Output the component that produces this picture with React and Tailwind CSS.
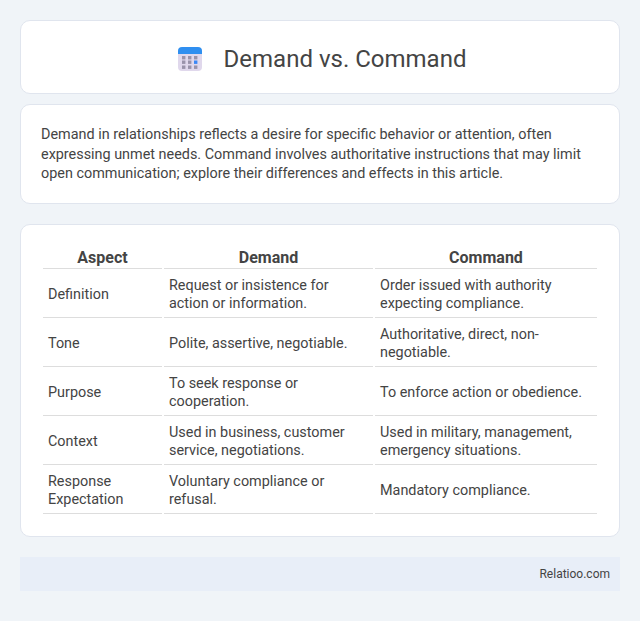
import React from 'react';

const rows = [
  ['Definition', 'Request or insistence for action or information.', 'Order issued with authority expecting compliance.'],
  ['Tone', 'Polite, assertive, negotiable.', 'Authoritative, direct, non-negotiable.'],
  ['Purpose', 'To seek response or cooperation.', 'To enforce action or obedience.'],
  ['Context', 'Used in business, customer service, negotiations.', 'Used in military, management, emergency situations.'],
  ['Response Expectation', 'Voluntary compliance or refusal.', 'Mandatory compliance.'],
];

const CalendarIcon = () => (
  <svg width="24" height="24" viewBox="0 0 24 24" className="shrink-0">
    <rect x="0" y="1" width="24" height="23" rx="4" fill="#e0d8ec" />
    <path d="M0 7V4a4 4 0 0 1 4-4h16a4 4 0 0 1 4 4v3z" fill="#2f8ff0" />
    {[4, 10, 16].map((x) =>
      [9, 13.5, 18.5].map((y) => (
        <rect key={`${x}-${y}`} x={x} y={y} width="3.4" height="3.4" fill={x === 16 && y === 13.5 ? '#3b88f5' : '#9a93aa'} />
      ))
    )}
  </svg>
);

export default function App() {
  return (
    <div className="min-h-[621px] bg-[#f0f4f8] px-5 pt-5 pb-[30px] text-[#444] font-['Roboto',sans-serif]">
      <div className="flex h-[74px] items-center justify-center gap-[22px] rounded-[10px] border border-[#e0e5ee] bg-white pt-[4px] pl-[4px]">
        <CalendarIcon />
        <h1 className="text-[24px] font-normal text-[#444]">Demand vs. Command</h1>
      </div>

      <div className="mt-[10px] h-[100px] rounded-[10px] border border-[#e0e5ee] bg-white px-5 pt-5 text-[14.4px] leading-[19.5px]">
        Demand in relationships reflects a desire for specific behavior or attention, often expressing unmet needs. Command involves authoritative instructions that may limit open communication; explore their differences and effects in this article.
      </div>

      <div className="mt-5 h-[313px] rounded-[10px] border border-[#e0e5ee] bg-white px-5 pt-5">
        <table className="w-full table-fixed border-separate border-spacing-[2px] text-[14.4px] leading-[18px]">
          <colgroup>
            <col className="w-[119px]" />
            <col className="w-[209px]" />
            <col />
          </colgroup>
          <thead>
            <tr>
              {['Aspect', 'Demand', 'Command'].map((h) => (
                <th key={h} className="border-b border-[#ddd] pt-px text-center text-[16px] font-bold leading-[20px]">{h}</th>
              ))}
            </tr>
          </thead>
          <tbody>
            {rows.map((r) => (
              <tr key={r[0]}>
                {r.map((c) => (
                  <td key={c} className="border-b border-[#ddd] px-[5px] pt-[6px] pb-[4px] align-middle">{c}</td>
                ))}
              </tr>
            ))}
          </tbody>
        </table>
      </div>

      <div className="mt-5 flex h-[34px] items-center justify-end bg-[#e8eef8] px-[10px] text-[12px]">Relatioo.com</div>
    </div>
  );
}
